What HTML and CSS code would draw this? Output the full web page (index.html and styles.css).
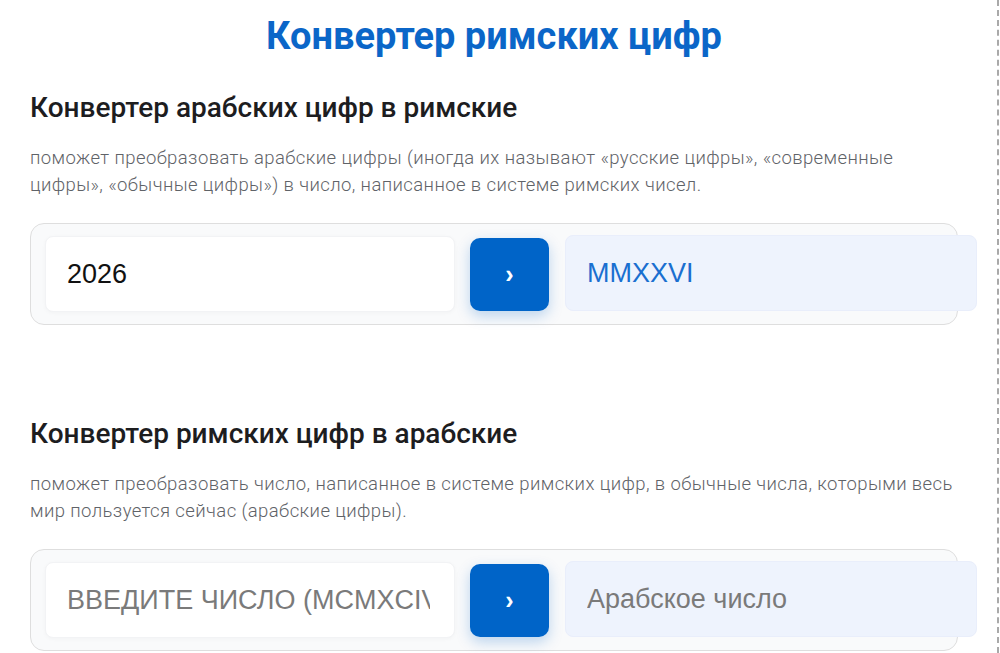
FILE: index.html
```html
<!DOCTYPE html>
<html lang="ru">
<head>
<meta charset="utf-8">
<title>Конвертер римских цифр</title>
<link rel="stylesheet" href="styles.css">
</head>
<body>
<div class="page">
  <h1 class="title">Конвертер римских цифр</h1>

  <section class="block">
    <h2 class="block-title">Конвертер арабских цифр в римские</h2>
    <p class="block-text">поможет преобразовать арабские цифры (иногда их называют «русские цифры», «современные цифры», «обычные цифры») в число, написанное в системе римских чисел.</p>
    <div class="converter">
      <input class="field" type="text" value="2026">
      <button class="go" type="button">›</button>
      <input class="result result-roman" type="text" value="MMXXVI" readonly>
    </div>
  </section>

  <section class="block block-second">
    <h2 class="block-title">Конвертер римских цифр в арабские</h2>
    <p class="block-text">поможет преобразовать число, написанное в системе римских цифр, в обычные числа, которыми весь мир пользуется сейчас (арабские цифры).</p>
    <div class="converter">
      <input class="field field-upper" type="text" placeholder="ВВЕДИТЕ ЧИСЛО (MCMXCIV)">
      <button class="go" type="button">›</button>
      <input class="result" type="text" placeholder="Арабское число" readonly>
    </div>
  </section>
</div>
</body>
</html>
```

FILE: styles.css
```css
* { box-sizing: border-box; }

html, body {
  margin: 0;
  padding: 0;
  background: #ffffff;
}

.page {
  width: 999px;
  height: 653px;
  padding: 0 39px 0 30px;
  border-right: 2px dashed #a9a9a9;
  overflow: hidden;
  font-family: Roboto, "Noto Sans", sans-serif;
}

.title {
  margin: 12px 0 0;
  font-size: 38px;
  line-height: 48px;
  font-weight: 700;
  color: #0b66c8;
  text-align: center;
}

.block-title {
  margin: 30px 0 0;
  font-size: 28px;
  line-height: 36px;
  font-weight: 500;
  color: #1d1d1f;
}

.block-text {
  margin: 19px 0 0;
  font-size: 18.5px;
  line-height: 27px;
  font-weight: 300;
  letter-spacing: 0.4px;
  color: #5f6368;
}

.converter {
  margin-top: 24px;
  width: 928px;
  height: 102px;
  display: flex;
  align-items: center;
  gap: 15px;
  padding: 0 14px;
  border: 1px solid #dedede;
  border-radius: 14px;
  background: #f9fafb;
}

.field,
.result {
  font-family: "Liberation Sans", Arial, sans-serif;
  font-size: 27px;
  outline: none;
  flex: none;
  width: 410px;
  height: 76px;
  padding: 0 24px 0 21px;
  border-radius: 8px;
}

.field {
  color: #111;
  background: #ffffff;
  border: 1px solid #f2f3f5;
  box-shadow: 0 1px 4px rgba(0, 0, 0, 0.03);
}

.field-upper::placeholder {
  text-transform: uppercase;
  color: #7a7a7a;
}

.go {
  flex: none;
  width: 79px;
  height: 73px;
  border: none;
  border-radius: 10px;
  background: #0064c8;
  color: #ffffff;
  font-family: "Liberation Sans", Arial, sans-serif;
  font-size: 25px;
  font-weight: 700;
  line-height: 1;
  box-shadow: 0 5px 14px rgba(0, 100, 200, 0.25);
}

.result {
  width: 412px;
  margin-left: 1px;
  margin-top: -2px;
  color: #1a6fd0;
  background: #eef3fd;
  border: 1px solid #e9eefb;
}

.result::placeholder {
  color: #7a7a7a;
}

.block-second .block-title {
  margin-top: 91px;
}
```
